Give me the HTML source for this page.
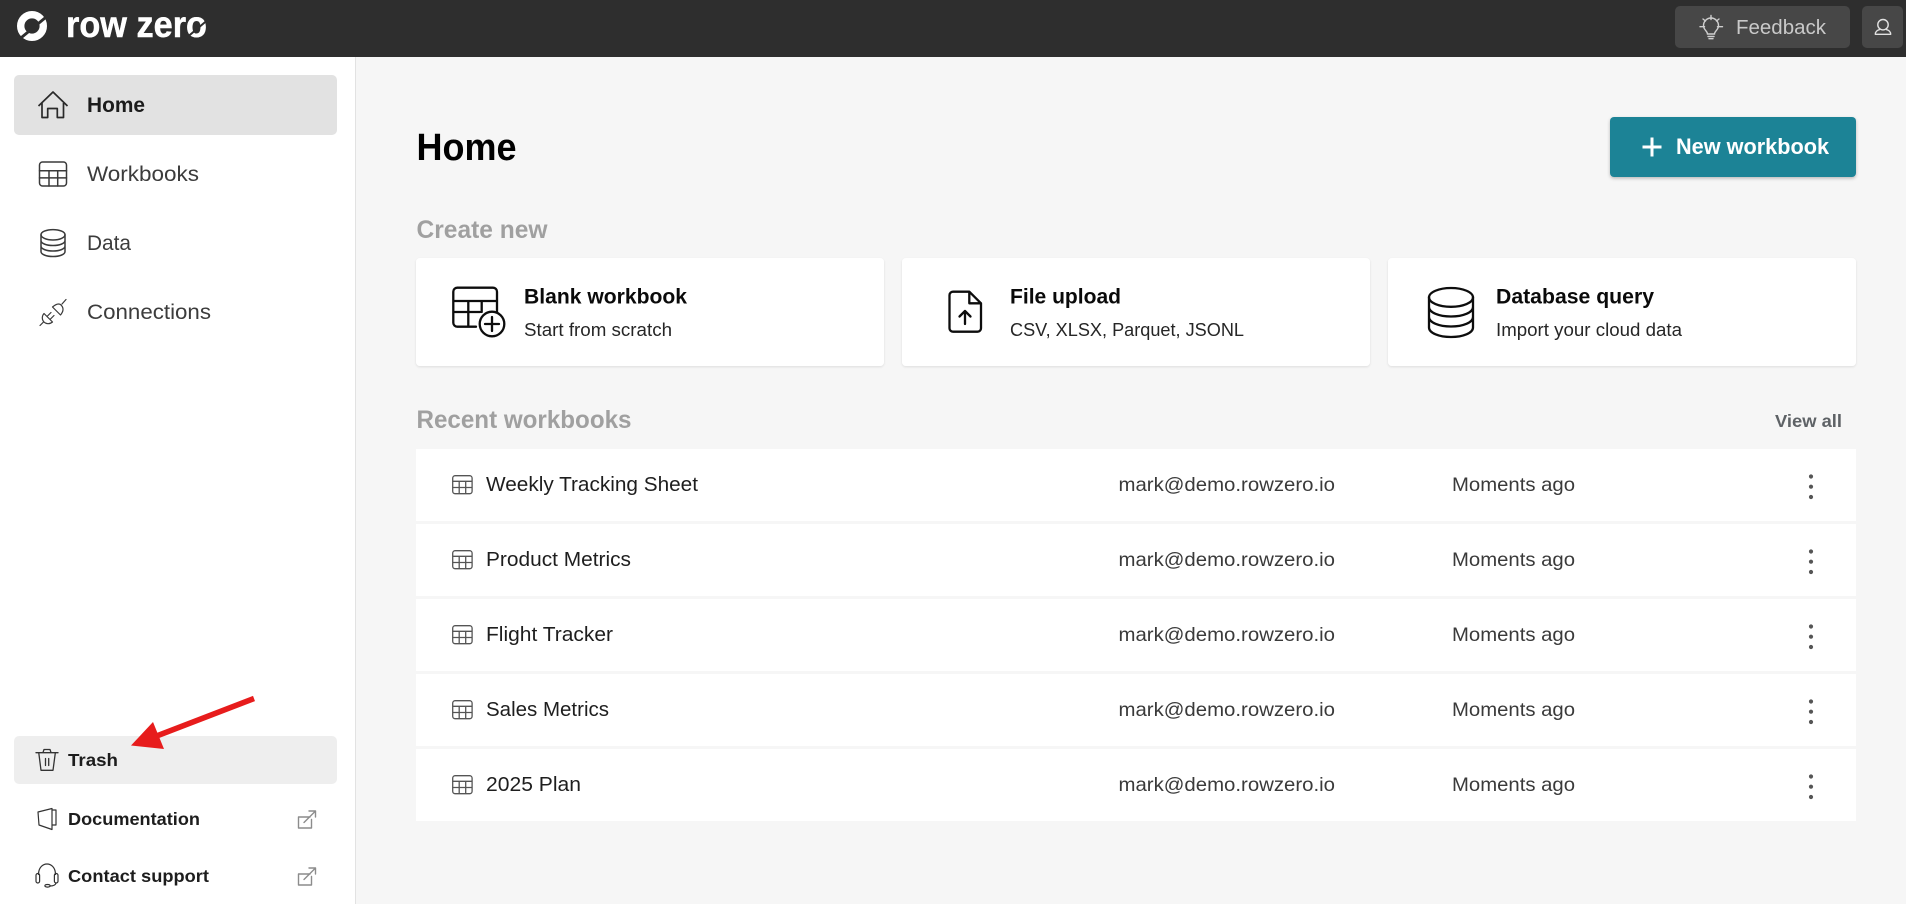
<!DOCTYPE html>
<html lang="en">
<head>
<meta charset="utf-8">
<title>Row Zero - Home</title>
<style>
html,body{margin:0;padding:0;width:1906px;height:904px;overflow:hidden;background:#f6f6f6}
svg{display:block;position:absolute;left:0;top:0}
text{font-family:"Liberation Sans",sans-serif}
.nav{font-size:21px;fill:#3c3c3c}
.foot{font-size:17.5px;font-weight:700;fill:#1d1d1d}
.ct{font-size:21px;font-weight:700;fill:#0a0a0a}
.cs{font-size:18px;fill:#262626}
.sec{font-size:25px;font-weight:700;fill:#a0a0a0}
.rt{font-size:20px;fill:#1e1e1e}
.re{font-size:19.5px;fill:#3a3a3a}
.ic{fill:none;stroke:#3a3a3a;stroke-width:1.5;stroke-linecap:round;stroke-linejoin:round}
.big{fill:none;stroke:#0d0d0d;stroke-width:2.3;stroke-linecap:round;stroke-linejoin:round}
.ext{fill:none;stroke:#8c8c8c;stroke-width:1.4;stroke-linecap:round;stroke-linejoin:round}
.row{fill:#fff}
.dot{fill:#555}
.card{fill:#fff;filter:url(#sh)}
</style>
</head>
<body>
<svg width="1906" height="904" viewBox="0 0 1906 904" xmlns="http://www.w3.org/2000/svg">
<defs>
<filter id="sh" x="-5%" y="-10%" width="110%" height="125%"><feDropShadow dx="0" dy="1" stdDeviation="1" flood-color="#000" flood-opacity=".1"/></filter>
<filter id="sb" x="-5%" y="-10%" width="110%" height="125%"><feDropShadow dx="0" dy="1.5" stdDeviation="1.5" flood-color="#000" flood-opacity=".25"/></filter>
<g id="tbl" fill="none" stroke="#555" stroke-width="1.3"><rect x="452.7" y="475.7" width="19.4" height="18" rx="2.4"/><path d="M452.7 481.3H472.1M452.7 487.5H472.1M459.2 481.3V493.7M465.7 481.3V493.7"/></g>
<g id="dots"><circle class="dot" cx="1811" cy="476.5" r="2.1"/><circle class="dot" cx="1811" cy="486.7" r="2.1"/><circle class="dot" cx="1811" cy="497" r="2.1"/></g>
<g id="ext"><path class="ext" d="M310 817H298.5V828H311.5V819.5M304 822.5L315.5 811M309 811H315.5V817"/></g>
</defs>

<!-- main and sidebar -->
<rect width="1906" height="904" fill="#f6f6f6"/>
<rect x="0" y="57" width="355" height="847" fill="#fff"/>
<rect x="355" y="57" width="1" height="847" fill="#e2e2e2"/>

<!-- top bar -->
<rect width="1906" height="57" fill="#2e2e2e"/>
<circle cx="32" cy="26" r="11.3" fill="none" stroke="#fff" stroke-width="7.4"/>
<path d="M48 15.5L19 39.5" stroke="#2e2e2e" stroke-width="2.8"/>
<text x="66" y="37" font-size="37" font-weight="700" fill="#fff" stroke="#fff" stroke-width=".5" textLength="141" lengthAdjust="spacingAndGlyphs">row zero</text>
<path d="M207 20.5L188 36.5" stroke="#2e2e2e" stroke-width="2"/>
<rect x="1675" y="6" width="175" height="42" rx="5" fill="#474747"/>
<g fill="none" stroke="#cfcfcf" stroke-width="1.4" stroke-linecap="round">
<path d="M1707.5 34C1707.5 31 1703.5 30 1703.5 25.5A7.5 7.5 0 0 1 1718.5 25.5C1718.5 30 1714.5 31 1714.5 34Z"/>
<path d="M1708 36.5H1714M1709 38.7H1713M1711 15.5V19.5M1700 26.7H1704.5M1717.5 26.7H1722.5M1703 19L1705.5 21M1719 19L1716.5 21"/>
</g>
<text x="1736" y="34" font-size="20" fill="#c9c9c9" textLength="90" lengthAdjust="spacingAndGlyphs">Feedback</text>
<rect x="1862" y="6" width="41" height="42" rx="5" fill="#474747"/>
<circle cx="1883" cy="24.7" r="5.2" fill="none" stroke="#e2e2e2" stroke-width="1.4"/>
<path d="M1880 29.4C1877.3 30 1875.3 31.8 1875.3 34.3H1890.7C1890.7 31.8 1888.7 30 1886 29.4" fill="none" stroke="#e2e2e2" stroke-width="1.4" stroke-linejoin="round"/>

<!-- sidebar nav -->
<rect x="14" y="75" width="323" height="60" rx="5" fill="#e2e2e2"/>
<path d="M38.5 106L53 92L67.5 106M42 103V117.5H47.7V108.5H57.3V117.5H63.5V103" fill="none" stroke="#2a2a2a" stroke-width="1.7" stroke-linejoin="round"/>
<text x="87" y="112" font-size="21" font-weight="700" fill="#1c1c1c" textLength="58" lengthAdjust="spacingAndGlyphs">Home</text>

<g class="ic"><rect x="39.5" y="162" width="27" height="24" rx="3"/><path d="M39.5 170.7H66.5M39.5 177.9H66.5M49 170.7V186M57.7 170.7V186"/></g>
<text class="nav" x="87" y="181" textLength="112" lengthAdjust="spacingAndGlyphs">Workbooks</text>

<g class="ic"><ellipse cx="53" cy="234.8" rx="12" ry="5.2"/><path d="M41 234.8V251.5C41 254.5 46.5 256.5 53 256.5S65 254.5 65 251.5V234.8M41 240.5C41 243.5 46.5 245.5 53 245.5S65 243.5 65 240.5M41 246C41 249 46.5 251 53 251S65 249 65 246"/></g>
<text class="nav" x="87" y="250" textLength="44" lengthAdjust="spacingAndGlyphs">Data</text>

<g fill="none" stroke="#3a3a3a" stroke-width="1.2" stroke-linecap="round" stroke-linejoin="round"><path d="M52.5 307L60.5 315C63 312 64 308.5 61.5 305.5S55.5 304.5 52.5 307ZM62 304L66 299.5M44 313.5L52.5 322C49.5 324.5 46 324 44 322S41.5 316.5 44 313.5ZM43.5 322L40 325.5M47 316.5L51 312.5M50 319.5L54 315.5"/></g>
<text class="nav" x="87" y="319" textLength="124" lengthAdjust="spacingAndGlyphs">Connections</text>

<!-- sidebar footer -->
<rect x="14" y="736" width="323" height="48" rx="5" fill="#eee"/>
<g fill="none" stroke="#333" stroke-width="1.3" stroke-linecap="round" stroke-linejoin="round"><path d="M36 752.7H58M43 752.5L44 749.5H50L51 752.5M38.8 753L41 770.3H53L55.3 753M45.5 758.5V765.5M48.7 758.5V765.5"/></g>
<text class="foot" x="68" y="766" textLength="50" lengthAdjust="spacingAndGlyphs">Trash</text>

<g fill="none" stroke="#333" stroke-width="1.2" stroke-linejoin="round"><path d="M38 812L52 808.5V829.5L39 825ZM52 810H56V825H52.5"/></g>
<text class="foot" x="68" y="825" textLength="132" lengthAdjust="spacingAndGlyphs">Documentation</text>
<use href="#ext"/>

<g fill="none" stroke="#333" stroke-width="1.2" stroke-linecap="round"><path d="M38.5 874.5C38.5 860.5 55.5 860.5 55.5 874.5"/><rect x="36" y="873.5" width="3.6" height="9.5" rx="1.8"/><rect x="54.4" y="873.5" width="3.6" height="9.5" rx="1.8"/><path d="M56 883C55.5 885.5 53 886 50 886"/><ellipse cx="47.5" cy="885.8" rx="2.6" ry="1.3"/></g>
<text class="foot" x="68" y="882" textLength="141" lengthAdjust="spacingAndGlyphs">Contact support</text>
<use href="#ext" y="57"/>

<!-- red annotation arrow -->
<path d="M254 698.5L154 737" stroke="#e71c1c" stroke-width="5.5"/>
<path d="M131 745.5L153 722L164 749Z" fill="#e71c1c"/>

<!-- page title -->
<text x="416.5" y="160" font-size="38" font-weight="700" fill="#000" textLength="100" lengthAdjust="spacingAndGlyphs">Home</text>
<rect x="1610" y="117" width="246" height="60" rx="4" fill="#1f8396" filter="url(#sb)"/>
<path d="M1652 137.5V156.5M1642.5 147H1661.5" stroke="#fff" stroke-width="3"/>
<text x="1676" y="154" font-size="22" font-weight="700" fill="#fff" textLength="153" lengthAdjust="spacingAndGlyphs">New workbook</text>

<!-- create new -->
<text class="sec" x="416.5" y="238" textLength="131" lengthAdjust="spacingAndGlyphs">Create new</text>

<rect class="card" x="416" y="258" width="468" height="108" rx="4"/>
<g class="big"><path d="M476 326.7H457.3A4 4 0 0 1 453.3 322.7V291.7A4 4 0 0 1 457.3 287.7H493A4 4 0 0 1 497 291.7V312.5M453.3 301H497M453.3 312H480M468.3 301V326.7M481.7 301V312"/><circle cx="492" cy="324" r="12.3"/><path d="M492 317V331M485 324H499"/></g>
<text class="ct" x="524" y="303.5" textLength="163" lengthAdjust="spacingAndGlyphs">Blank workbook</text>
<text class="cs" x="524" y="336" textLength="148" lengthAdjust="spacingAndGlyphs">Start from scratch</text>

<rect class="card" x="902" y="258" width="468" height="108" rx="4"/>
<g class="big"><path d="M969.3 291.7H953A3.5 3.5 0 0 0 949.5 295.2V328.2A3.5 3.5 0 0 0 953 331.7H977.5A3.5 3.5 0 0 0 981 328.2V303.3ZM969.3 292V303.3H981M965 324V311M959.5 316.5L965 311L970.5 316.5"/></g>
<text class="ct" x="1010" y="303.5" textLength="111" lengthAdjust="spacingAndGlyphs">File upload</text>
<text class="cs" x="1010" y="336" textLength="234" lengthAdjust="spacingAndGlyphs">CSV, XLSX, Parquet, JSONL</text>

<rect class="card" x="1388" y="258" width="468" height="108" rx="4"/>
<g class="big"><ellipse cx="1451" cy="297.4" rx="22" ry="9.4"/><path d="M1429 297.4V327.5C1429 333 1439 337 1451 337S1473 333 1473 327.5V297.4M1429 307C1429 312.5 1439 316.5 1451 316.5S1473 312.5 1473 307M1429 317C1429 322.5 1439 326.5 1451 326.5S1473 322.5 1473 317"/></g>
<text class="ct" x="1496" y="303.5" textLength="158" lengthAdjust="spacingAndGlyphs">Database query</text>
<text class="cs" x="1496" y="336" textLength="186" lengthAdjust="spacingAndGlyphs">Import your cloud data</text>

<!-- recent -->
<text class="sec" x="416.5" y="428" textLength="215" lengthAdjust="spacingAndGlyphs">Recent workbooks</text>
<text x="1775" y="427" font-size="17.5" font-weight="700" fill="#5e6266" textLength="67" lengthAdjust="spacingAndGlyphs">View all</text>

<rect class="row" x="416" y="449" width="1440" height="72"/>
<use href="#tbl"/>
<text class="rt" x="486" y="491" textLength="212" lengthAdjust="spacingAndGlyphs">Weekly Tracking Sheet</text>
<text class="re" x="1118.5" y="491" textLength="216.5" lengthAdjust="spacingAndGlyphs">mark@demo.rowzero.io</text>
<text class="re" x="1452" y="491" textLength="123" lengthAdjust="spacingAndGlyphs">Moments ago</text>
<use href="#dots"/>

<rect class="row" x="416" y="524" width="1440" height="72"/>
<use href="#tbl" y="75"/>
<text class="rt" x="486" y="566" textLength="145" lengthAdjust="spacingAndGlyphs">Product Metrics</text>
<text class="re" x="1118.5" y="566" textLength="216.5" lengthAdjust="spacingAndGlyphs">mark@demo.rowzero.io</text>
<text class="re" x="1452" y="566" textLength="123" lengthAdjust="spacingAndGlyphs">Moments ago</text>
<use href="#dots" y="75"/>

<rect class="row" x="416" y="599" width="1440" height="72"/>
<use href="#tbl" y="150"/>
<text class="rt" x="486" y="641" textLength="127" lengthAdjust="spacingAndGlyphs">Flight Tracker</text>
<text class="re" x="1118.5" y="641" textLength="216.5" lengthAdjust="spacingAndGlyphs">mark@demo.rowzero.io</text>
<text class="re" x="1452" y="641" textLength="123" lengthAdjust="spacingAndGlyphs">Moments ago</text>
<use href="#dots" y="150"/>

<rect class="row" x="416" y="674" width="1440" height="72"/>
<use href="#tbl" y="225"/>
<text class="rt" x="486" y="716" textLength="123" lengthAdjust="spacingAndGlyphs">Sales Metrics</text>
<text class="re" x="1118.5" y="716" textLength="216.5" lengthAdjust="spacingAndGlyphs">mark@demo.rowzero.io</text>
<text class="re" x="1452" y="716" textLength="123" lengthAdjust="spacingAndGlyphs">Moments ago</text>
<use href="#dots" y="225"/>

<rect class="row" x="416" y="749" width="1440" height="72"/>
<use href="#tbl" y="300"/>
<text class="rt" x="486" y="791" textLength="95" lengthAdjust="spacingAndGlyphs">2025 Plan</text>
<text class="re" x="1118.5" y="791" textLength="216.5" lengthAdjust="spacingAndGlyphs">mark@demo.rowzero.io</text>
<text class="re" x="1452" y="791" textLength="123" lengthAdjust="spacingAndGlyphs">Moments ago</text>
<use href="#dots" y="300"/>
</svg>
</body>
</html>
